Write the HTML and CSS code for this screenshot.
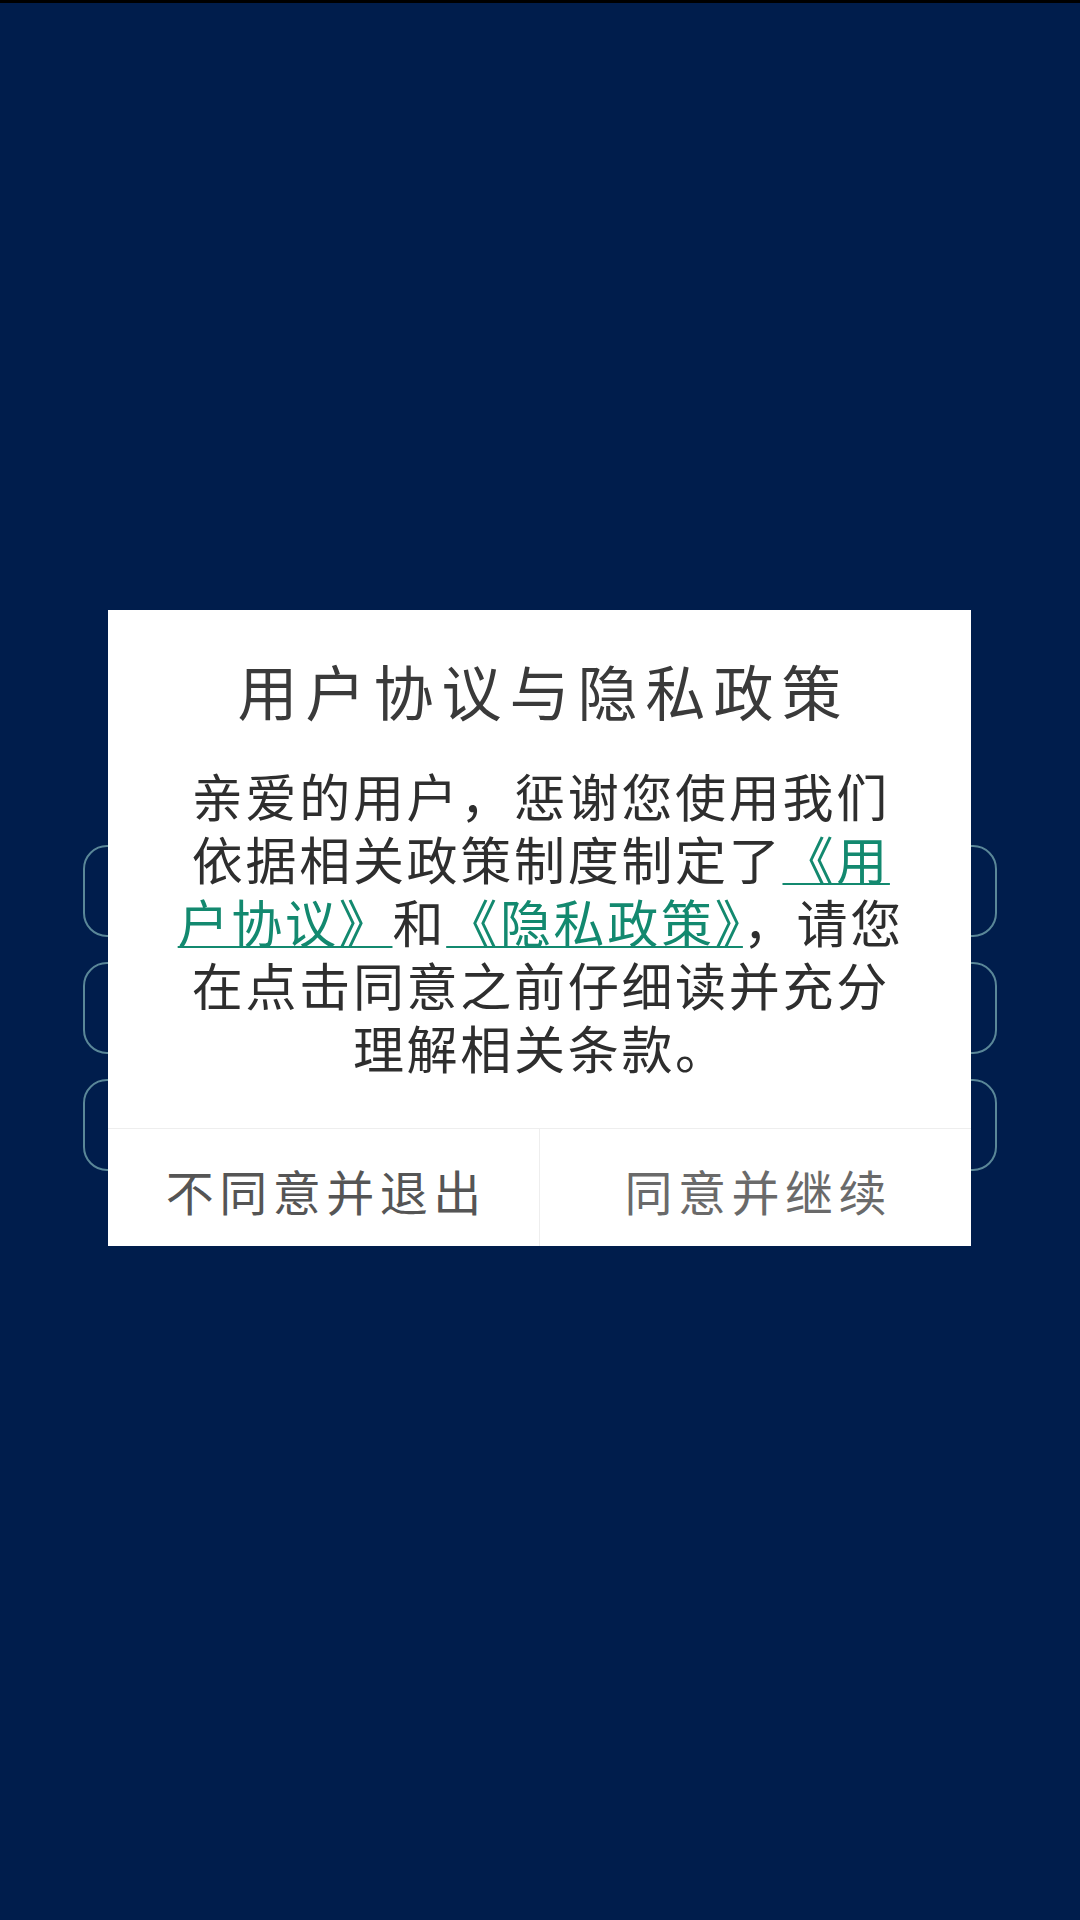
FILE: index.html
```html
<!DOCTYPE html>
<html lang="zh-CN">
<head>
<meta charset="utf-8">
<title>用户协议与隐私政策</title>
<link rel="stylesheet" href="styles.css">
</head>
<body>
<div class="screen">
  <div class="bg-list">
    <div class="bg-item"></div>
    <div class="bg-item"></div>
    <div class="bg-item"></div>
  </div>

  <div class="dialog">
    <h1 class="dialog-title">用户协议与隐私政策</h1>
    <div class="dialog-text">
      <div class="line">亲爱的用户，惩谢您使用我们</div>
      <div class="line">依据相关政策制度制定了<a class="link" href="#">《用</a></div>
      <div class="line"><a class="link" href="#">户协议》</a>和<a class="link" href="#">《隐私政策》</a>，请您</div>
      <div class="line">在点击同意之前仔细读并充分</div>
      <div class="line">理解相关条款。</div>
    </div>
    <div class="dialog-actions">
      <div class="btn btn-cancel">不同意并退出</div>
      <div class="btn btn-ok">同意并继续</div>
    </div>
  </div>
</div>
</body>
</html>
```

FILE: styles.css
```css
html, body {
  margin: 0;
  padding: 0;
}

body {
  background: #001d4c;
  font-family: "Noto Sans CJK SC", "Noto Sans", sans-serif;
}

.screen {
  position: relative;
  width: 1080px;
  height: 1920px;
  box-sizing: border-box;
  border-top: 3px solid #000;
  overflow: hidden;
}

.bg-list {
  display: flex;
  flex-direction: column;
  gap: 25px;
  padding: 842px 83px 0;
}

.bg-item {
  height: 88px;
  border: 2px solid #5a8798;
  border-radius: 24px;
}

.dialog {
  position: absolute;
  top: 607px;
  left: 108px;
  width: 863px;
  height: 636px;
  background: #fff;
  display: flex;
  flex-direction: column;
}

.dialog-title {
  margin: 0;
  padding-top: 45px;
  height: 70px;
  box-sizing: content-box;
  font-size: 60px;
  font-weight: 400;
  line-height: 70px;
  letter-spacing: 8px;
  text-indent: 8px;
  color: #3a3a3a;
  text-align: center;
  white-space: nowrap;
}

.dialog-text {
  margin-top: 39px;
  display: flex;
  flex-direction: column;
  align-items: center;
  font-size: 51px;
  font-weight: 400;
  line-height: 63px;
  letter-spacing: 2.7px;
  color: #2e2e2e;
}

.line {
  height: 63px;
  white-space: nowrap;
  padding-left: 2.7px;
}

.link {
  color: #13896f;
  text-decoration: underline;
  text-decoration-thickness: 2px;
  text-underline-offset: 3px;
}

.dialog-actions {
  margin-top: auto;
  height: 117px;
  border-top: 1px solid #eeeeee;
  display: flex;
}

.btn {
  flex: 1;
  display: flex;
  align-items: center;
  justify-content: center;
  font-size: 48px;
  font-weight: 400;
  letter-spacing: 5.5px;
  text-indent: 5.5px;
  padding-top: 4px;
}

.btn-cancel {
  color: #555;
  border-right: 1px solid #eeeeee;
}

.btn-ok {
  color: #6a6a6a;
}
```
